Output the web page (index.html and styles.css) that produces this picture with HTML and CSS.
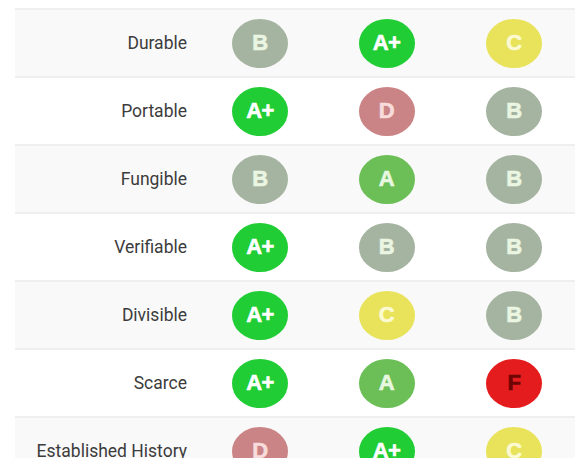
FILE: index.html
```html
<!DOCTYPE html>
<html>
<head>
<meta charset="utf-8">
<link rel="stylesheet" href="styles.css">
</head>
<body>
<div class="table">
  <div class="row shade">
    <div class="label">Durable</div>
    <div class="cell"><span class="badge b">B</span></div>
    <div class="cell"><span class="badge ap">A+</span></div>
    <div class="cell"><span class="badge c">C</span></div>
  </div>
  <div class="row">
    <div class="label">Portable</div>
    <div class="cell"><span class="badge ap">A+</span></div>
    <div class="cell"><span class="badge d">D</span></div>
    <div class="cell"><span class="badge b">B</span></div>
  </div>
  <div class="row shade">
    <div class="label">Fungible</div>
    <div class="cell"><span class="badge b">B</span></div>
    <div class="cell"><span class="badge a">A</span></div>
    <div class="cell"><span class="badge b">B</span></div>
  </div>
  <div class="row">
    <div class="label">Verifiable</div>
    <div class="cell"><span class="badge ap">A+</span></div>
    <div class="cell"><span class="badge b">B</span></div>
    <div class="cell"><span class="badge b">B</span></div>
  </div>
  <div class="row shade">
    <div class="label">Divisible</div>
    <div class="cell"><span class="badge ap">A+</span></div>
    <div class="cell"><span class="badge c">C</span></div>
    <div class="cell"><span class="badge b">B</span></div>
  </div>
  <div class="row">
    <div class="label">Scarce</div>
    <div class="cell"><span class="badge ap">A+</span></div>
    <div class="cell"><span class="badge a">A</span></div>
    <div class="cell"><span class="badge f">F</span></div>
  </div>
  <div class="row shade">
    <div class="label">Established History</div>
    <div class="cell"><span class="badge d">D</span></div>
    <div class="cell"><span class="badge ap">A+</span></div>
    <div class="cell"><span class="badge c">C</span></div>
  </div>
</div>
</body>
</html>
```
FILE: styles.css
```css
html, body {
  margin: 0;
  padding: 0;
  background: #ffffff;
  overflow: hidden;
}
body {
  font-family: Roboto, "Liberation Sans", sans-serif;
}
.table {
  margin: 8px 0 0 15px;
  width: 560px;
}
.row {
  display: grid;
  grid-template-columns: 182px 126px 127px 125px;
  align-items: center;
  height: 66px;
  border-top: 2px solid #efefef;
  background: #ffffff;
}
.row.shade {
  background: #f9f9f9;
}
.label {
  text-align: right;
  padding-right: 10px;
  font-size: 17.5px;
  color: #3c3c3c;
}
.cell {
  display: flex;
  justify-content: center;
}
.cell:last-child {
  padding-left: 3px;
}
.badge {
  width: 56px;
  height: 49px;
  border-radius: 50%;
  display: flex;
  align-items: center;
  justify-content: center;
  font-family: "Liberation Sans", Arial, sans-serif;
  font-weight: bold;
  font-size: 22px;
  letter-spacing: -0.5px;
  -webkit-text-stroke: 0.6px currentColor;
}
.b { background: #a5b4a1; color: #eaf5e2; }
.ap { background: #20cd35; color: #ffffff; }
.a { background: #6cbf57; color: #e8f8e0; }
.c { background: #e8e35a; color: #fbfad2; }
.d { background: #cb8485; color: #f8dcdc; }
.f { background: #e41c1e; color: #6e0404; }
```
